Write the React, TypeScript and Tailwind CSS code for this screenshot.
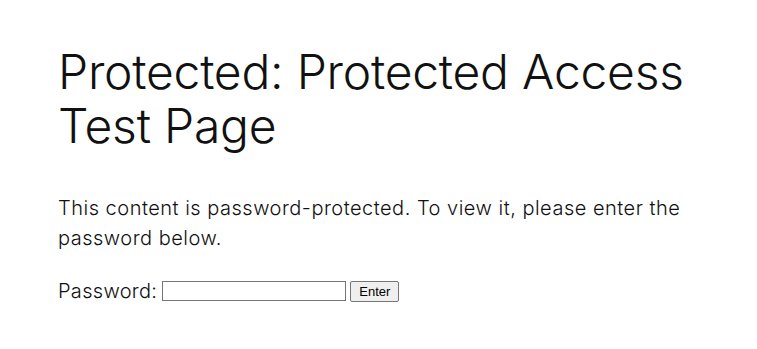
export default function App() {
  return (
    <div
      className="min-h-screen bg-white text-[#111111]"
      style={{ fontFamily: "Inter, 'Noto Sans', sans-serif" }}
    >
      <div className="px-[58px] pt-[45px]">
        <h1 className="text-[48px] font-light leading-[54px] tracking-[-0.005em]">
          Protected: Protected Access Test Page
        </h1>
        <p className="mt-[40px] max-w-[660px] text-[20px] font-light leading-[30px] tracking-[0.025em]">
          This content is password-protected. To view it, please enter the password below.
        </p>
        <form className="mt-[23px] flex items-center text-[20px] font-light tracking-[0.015em]">
          <label className="flex items-center">
            Password:
            <input
              type="password"
              className="ml-[5px] h-[20px] w-[184px] border border-[#767676] bg-white"
            />
          </label>
          <button
            type="button"
            className="ml-[4px] h-[21px] rounded-[2px] border border-[#767676] bg-[#efefef] px-[8px] text-[13px] leading-none tracking-normal text-black"
            style={{ fontFamily: "'Liberation Sans', Arial, sans-serif" }}
          >
            Enter
          </button>
        </form>
      </div>
    </div>
  );
}
